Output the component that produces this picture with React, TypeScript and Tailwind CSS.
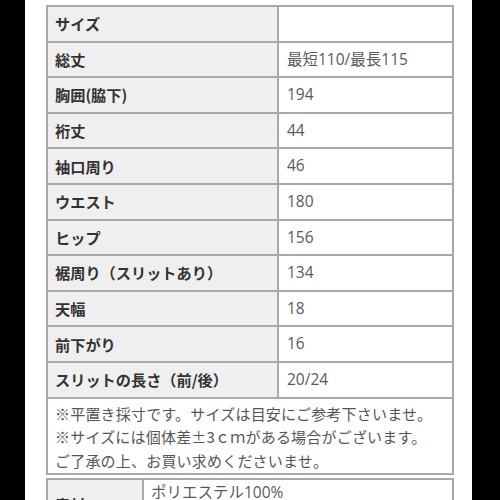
import React from "react";

const rows: [string, string][] = [
  ["サイズ", ""],
  ["総丈", "最短110/最長115"],
  ["胸囲(脇下)", "194"],
  ["裄丈", "44"],
  ["袖口周り", "46"],
  ["ウエスト", "180"],
  ["ヒップ", "156"],
  ["裾周り（スリットあり）", "134"],
  ["天幅", "18"],
  ["前下がり", "16"],
  ["スリットの長さ（前/後）", "20/24"],
];

const valFont = { fontFamily: '"Open Sans", "Noto Sans CJK JP", sans-serif' };

export default function App() {
  return (
    <div
      className="flex w-[500px] h-[500px] overflow-hidden bg-black"
      style={{ fontFamily: '"Noto Sans CJK JP", "Noto Sans", sans-serif' }}
    >
      <div className="w-[25px] shrink-0 bg-black" />
      <div className="flex-1 bg-white pl-[21px] pr-[18px] pt-[5px]">
        <table className="w-full border-collapse table-fixed">
          <colgroup>
            <col className="w-[231px]" />
            <col />
          </colgroup>
          <tbody>
            {rows.map(([k, v]) => (
              <tr key={k} className="h-[35.6px]">
                <td className="border-2 border-[#a9a9a9] bg-[#efefef] pl-[7px] text-[15.2px] font-bold text-[#333] leading-none">
                  {k}
                </td>
                <td
                  className="border-2 border-[#a9a9a9] bg-white pl-[8px] text-[15.5px] text-[#5a5a5a] leading-none"
                  style={valFont}
                >
                  {v}
                </td>
              </tr>
            ))}
            <tr>
              <td
                colSpan={2}
                className="border-2 border-[#a9a9a9] bg-white pl-[7px] pt-[3px] pb-[1px] text-[15px] tracking-[0.2px] leading-[23.5px] text-[#555] whitespace-nowrap"
              >
                ※平置き採寸です。サイズは目安にご参考下さいませ。
                <br />
                ※サイズには個体差±3ｃｍがある場合がございます。
                <br />
                ご了承の上、お買い求めくださいませ。
              </td>
            </tr>
          </tbody>
        </table>
        <table className="w-full border-collapse table-fixed mt-[3px]">
          <colgroup>
            <col className="w-[96px]" />
            <col />
          </colgroup>
          <tbody>
            <tr className="h-[50px]">
              <td className="border-2 border-[#a9a9a9] bg-[#efefef] pl-[7px] text-[15.2px] font-bold text-[#333] align-middle">
                素材
              </td>
              <td
                className="border-2 border-[#a9a9a9] bg-white pl-[7px] pt-[2px] text-[15.5px] text-[#5a5a5a] align-top leading-[20px]"
                style={valFont}
              >
                ポリエステル100%
              </td>
            </tr>
          </tbody>
        </table>
      </div>
      <div className="w-[28px] shrink-0 bg-black" />
    </div>
  );
}
